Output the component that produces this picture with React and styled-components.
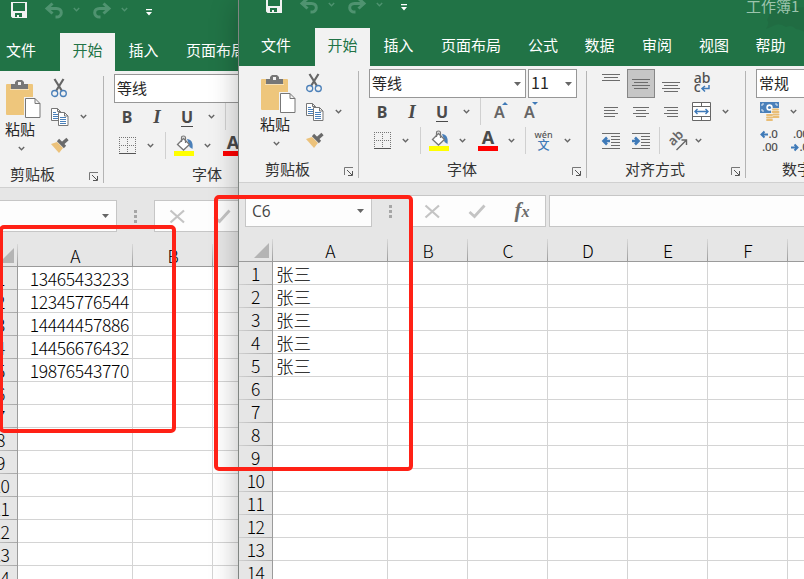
import React from "react";
import styled, { createGlobalStyle, css } from "styled-components";

const UI = `"Noto Sans CJK SC", "Noto Sans", sans-serif`;
const LIGHT = `"Noto Sans CJK SC Light", "Noto Sans CJK SC DemiLight", "Noto Sans CJK SC", sans-serif`;
const LATIN = `"Noto Sans", "Open Sans", sans-serif`;

const Global = createGlobalStyle`
  *, *::before, *::after { box-sizing: border-box; }
  html, body { margin: 0; padding: 0; overflow: hidden; }
  svg { display: block; flex: none; overflow: visible; }
`;

const Desktop = styled.div`
  position: relative;
  width: 804px;
  height: 579px;
  overflow: hidden;
  background: #fff;
  font-family: ${UI};
`;

const Window = styled.section`
  position: absolute;
  left: ${(p) => p.$x}px;
  top: ${(p) => p.$y}px;
  width: 640px;
  height: 600px;
  overflow: hidden;
  background: #e6e6e6;
  display: flex;
  flex-direction: column;
`;

const WindowShadow = styled.div`
  position: absolute;
  left: 238px;
  top: -5px;
  width: 640px;
  height: 620px;
  background: #808582;
  box-shadow: 0 10px 26px rgba(0, 0, 0, 0.27);
`;

const TitleBar = styled.header`
  height: 33px;
  flex: none;
  display: flex;
  align-items: flex-start;
  background: #217346;
`;

const QuickTools = styled.div`
  display: flex;
  align-items: flex-start;
  padding: 2px 0 0 27px;
  width: 507px;
`;

const QuickTool = styled.div`
  width: ${(p) => p.$w}px;
  padding-top: ${(p) => p.$drop || 0}px;
`;

const BookTitle = styled.div`
  width: 133px;
  height: 33px;
  font-size: 15px;
  line-height: 21px;
  color: #9cc4ad;
  white-space: nowrap;
  position: relative;
`;

const BookName = styled.span`
  position: relative;
`;

const Cloud = styled.svg`
  position: absolute;
  left: 18px;
  top: 12px;
`;

const Tabs = styled.nav`
  height: 38px;
  flex: none;
  display: flex;
  background: #217346;
`;

const Tab = styled.div`
  width: ${(p) => p.$w}px;
  flex: none;
  text-align: center;
  font-size: 15px;
  line-height: 33px;
  white-space: nowrap;
  color: ${(p) => (p.$active ? "#217346" : "#fff")};
  background: ${(p) => (p.$active ? "#f2f2f2" : "transparent")};
  &:first-child { padding-right: 2px; }
`;

const Ribbon = styled.div`
  height: 117px;
  flex: none;
  display: flex;
  background: #f2f2f2;
  border-bottom: 1px solid #d0d0d0;
`;

const Group = styled.div`
  width: ${(p) => p.$w}px;
  flex: none;
  padding-top: 3px;
  display: flex;
  flex-direction: column;
`;

const GroupDivider = styled.div`
  width: 1px;
  height: 107px;
  margin-top: 5px;
  background: #b4b4b4;
  flex: none;
`;

const ToolRow = styled.div`
  height: 29px;
  flex: none;
  display: flex;
  align-items: center;
  padding-left: ${(p) => p.$pad || 0}px;
  &:nth-child(2) { margin-top: -1px; }
`;

const Slot = styled.div`
  width: ${(p) => p.$w}px;
  height: 29px;
  flex: none;
  display: flex;
  align-items: center;
  justify-content: center;
  margin-left: ${(p) => p.$ml || 0}px;
  ${(p) => p.$pressed && css`background: #c6c6c6; border: 1px solid #868686;`}
`;

const Rule = styled.div`
  width: 1px;
  height: 27px;
  background: #d0d0d0;
`;

const Combo = styled.div`
  width: ${(p) => p.$w}px;
  height: 29px;
  flex: none;
  display: flex;
  align-items: center;
  justify-content: space-between;
  margin-right: 2px;
  padding: 0 4px 0 2px;
  border: 1px solid #979797;
  background: #fff;
  color: #262626;
  font-size: ${(p) => p.$size || 15}px;
  line-height: 25px;
  white-space: nowrap;
  span { height: 27px; }
`;

const GroupFooter = styled.div`
  height: 27px;
  display: flex;
  align-items: center;
  justify-content: space-between;
  padding: 0 4px 0 ${(p) => p.$pad}px;
  font-size: 15px;
  color: #333;
  white-space: nowrap;
`;

const Launch = styled.div`
  padding-top: 5px;
`;

const ClipTools = styled.div`
  height: 86px;
  display: flex;
`;

const PasteColumn = styled.div`
  width: 61px;
  display: flex;
  flex-direction: column;
  padding: 6px 0 0 22px;
`;

const PasteLabel = styled.div`
  font-size: 15px;
  line-height: 20px;
  margin-left: -1px;
  color: #262626;
  white-space: nowrap;
`;

const PasteArrow = styled.div`
  padding: 7px 0 0 12px;
`;

const ClipColumn = styled.div`
  display: flex;
  flex-direction: column;
  width: 58px;
`;

const Glyph = styled.span`
  font-family: ${LATIN};
  font-weight: 700;
  font-size: 16px;
  line-height: 20px;
  color: #4a4a4a;
`;

const ItalicGlyph = styled(Glyph)`
  font-family: "Liberation Serif", serif;
  font-style: italic;
  font-size: 19px;
`;

const UnderGlyph = styled(Glyph)`
  line-height: 15px;
  margin-top: 3px;
  padding-bottom: 1px;
  border-bottom: 1px solid #4a4a4a;
`;

const FormulaBar = styled.div`
  height: 56px;
  flex: none;
  display: flex;
  align-items: flex-start;
  padding: 12px 0 0 6px;
`;

const NameBox = styled.div`
  width: 127px;
  height: 32px;
  display: flex;
  align-items: center;
  justify-content: space-between;
  padding: 0 7px 0 6px;
  border: 1px solid #c6c6c6;
  background: #fdfdfd;
  color: #444;
  font-family: "Open Sans", sans-serif;
  font-size: 15.5px;
`;

const Grip = styled.div`
  width: 37px;
  height: 32px;
  display: flex;
  align-items: center;
  justify-content: center;
`;

const EditKeys = styled.div`
  width: 137px;
  height: 32px;
  display: flex;
  align-items: center;
  border: 1px solid #c6c6c6;
  background: #fdfdfd;
`;

const EditKey = styled.div`
  width: 45px;
  display: flex;
  justify-content: center;
  padding-right: 1px;
`;

const FxKey = styled(EditKey)`
  font-family: "Liberation Serif", serif;
  font-style: italic;
  font-weight: 700;
  font-size: 21px;
  line-height: 26px;
  height: 28px;
  color: #6a6a6a;
  span { font-size: 16px; padding-top: 2px; }
`;

const FormulaInput = styled.div`
  flex: 1;
  height: 32px;
  margin-left: 3px;
  border: 1px solid #c6c6c6;
  background: #fdfdfd;
`;

const Sheet = styled.div`
  display: grid;
  grid-template-columns: 34px 115px repeat(7, 80px);
  grid-auto-rows: 23px;
  flex: none;
  font-family: ${LIGHT};
  font-weight: 300;
  font-size: 17.5px;
  line-height: 23px;
  color: #000;
`;

const Corner = styled.div`
  border-bottom: 1px solid #9b9b9b;
  display: flex;
  justify-content: flex-end;
  padding: 4px 4px 0 0;
  background: linear-gradient(#d8d8d8, #9b9b9b) right / 1px 100% no-repeat;
`;

const ColumnHead = styled.div`
  text-align: center;
  border-bottom: 1px solid #9b9b9b;
  background: linear-gradient(#d8d8d8, #9b9b9b) right / 1px 100% no-repeat;
`;

const RowHead = styled.div`
  text-align: center;
  letter-spacing: -0.5px;
  border-right: 1px solid #9b9b9b;
  background: linear-gradient(90deg, #d0d0d0, #a8a8a8) bottom / 100% 1px no-repeat;
`;

const Cell = styled.div`
  background: #fff;
  border-right: 1px solid #d4d4d4;
  border-bottom: 1px solid #d4d4d4;
  padding: 0 3px;
  text-align: ${(p) => (p.$number ? "right" : "left")};
  letter-spacing: ${(p) => (p.$number ? "-0.34px" : "0")};
  white-space: nowrap;
`;

const Marker = styled.div`
  position: absolute;
  left: ${(p) => p.$x}px;
  top: ${(p) => p.$y}px;
  width: ${(p) => p.$w}px;
  height: ${(p) => p.$h}px;
  border: 4px solid #ff2116;
  border-radius: 5px;
`;

const Chevron = ({ color = "#666" }) => (
  <svg width="7" height="5" viewBox="0 0 7 5">
    <path d="M.8 1 3.500 3.700 6.200 1" fill="none" stroke={color} strokeWidth="1.4" />
  </svg>
);

const Triangle = () => (
  <svg width="7" height="4" viewBox="0 0 7 4"><path d="M0 0h7L3.500 4z" fill="#666" /></svg>
);

const SaveIcon = () => (
  <svg width="16" height="16" viewBox="0 0 16 16">
    <path fillRule="evenodd" fill="#f2f2f2" d="M0 0h16v16H1.500L0 14.500zM2 1v8h12V1zM4 11v4h2v-2h2v2h3v-4z" />
  </svg>
);

const UndoIcon = ({ flip }) => (
  <svg width="18" height="16" viewBox="0 0 18 16">
    <g transform={flip ? "matrix(-1 0 0 1 18 0)" : undefined} fill="none" stroke="#4f9370" strokeWidth="3">
      <path d="M7.500 .500 2 5.500 7.500 10.500" />
      <path d="M2 5.500h9.500c3 0 4.800 1.800 4.800 4.200 0 2.600-2 4.300-4.800 4.300h-1" />
    </g>
  </svg>
);

const MoreIcon = () => (
  <svg width="6" height="7" viewBox="0 0 6 7"><path fill="#fff" d="M0 0h6v1.200H0zM0 3h6L3 6.500z" /></svg>
);

const PasteIcon = () => (
  <svg width="35" height="39" viewBox="0 0 35 39">
    <rect x="0" y="4" width="27" height="31" rx="1" fill="#eec67c" />
    <path d="M5 4h4V2l2-2h5l2 2v2h4v5H5z" fill="#777" />
    <path d="M12 2h3v3h-3z" fill="#f2f2f2" />
    <path d="M4 9.500h19" stroke="#f6e1b8" />
    <path d="M18 17h12l5 5v17H18z" fill="#f2f2f2" />
    <path d="M19.500 18.500h9.500l5 5v14h-14.500zM29 18.500v5h5" fill="#fff" stroke="#777" />
  </svg>
);

const CutIcon = () => (
  <svg width="17" height="19" viewBox="0 0 17 19">
    <path d="M3.500 0 11 12M12.500 0 5 12" stroke="#666" strokeWidth="2.200" fill="none" />
    <circle cx="3.700" cy="14.500" r="3" fill="none" stroke="#4a7fb8" strokeWidth="1.300" />
    <circle cx="12.300" cy="14.500" r="3" fill="none" stroke="#4a7fb8" strokeWidth="1.300" />
  </svg>
);

const CopyIcon = () => (
  <svg width="18" height="18" viewBox="0 0 18 18">
    <path d="M.5.500h6l3 3v9h-9zM6.500.500v3h3" fill="#fff" stroke="#777" />
    <path d="M2 4.500h3M2 6.500h5M2 8.500h5M2 10.500h5" stroke="#4a80ba" />
    <path d="M7.500 4.500h6l3.500 3.500v9.500h-9.500zM13.500 4.500v3.500h3.500" fill="#fff" stroke="#777" />
    <path d="M9 9.500h6M9 11.500h6M9 13.500h6M9 15.500h6" stroke="#4a80ba" />
  </svg>
);

const BrushIcon = () => (
  <svg width="18" height="15" viewBox="0 0 18 15">
    <path d="m0 6 6-2 6 6-4 5z" fill="#ecc27b" />
    <path d="m7 2 7 7" stroke="#6a6a6a" strokeWidth="3.200" />
    <path d="m11.500 5.500 5-4.500" stroke="#6a6a6a" strokeWidth="3.400" />
  </svg>
);

const LaunchIcon = () => (
  <svg width="10" height="9" viewBox="0 0 10 9">
    <path d="M.5 8V.500H9" fill="none" stroke="#777" />
    <path d="m3 3 5 5M8.500 4v4.500H4" fill="none" stroke="#555" />
  </svg>
);

const BorderIcon = () => (
  <svg width="17" height="17" viewBox="0 0 17 17">
    <path d="M0 .500h17M0 8.500h17M.5 0v16M8.500 0v16M16.500 0v16" stroke="#777" strokeDasharray="1 1" fill="none" />
    <path d="M0 16.500h17" stroke="#555" />
  </svg>
);

const BucketIcon = () => (
  <svg width="20" height="20" viewBox="0 0 20 20">
    <path d="M13 3c4 .500 6.500 3 5.500 10l-3-2-1-4z" fill="#4a80ba" />
    <path d="m3.500 8.500 6-6 6 6-6 5.500z" fill="#fff" stroke="#777" strokeWidth="1.300" />
    <path d="M7.500 6V2q0-2 2-2t2 2v5" fill="none" stroke="#777" strokeWidth="1.200" />
    <path d="M0 15h20v5H0z" fill="#ff0" />
  </svg>
);

const FontColor = styled.div`
  width: 20px;
  height: 20px;
  border-bottom: 5px solid #f00;
  text-align: center;
  font: 700 18px/13px ${LATIN};
  color: #4a4a4a;
`;

const SizeStep = styled.div`
  display: flex;
  align-items: flex-start;
  font: 600 16px/20px ${LATIN};
  color: #666;
  svg { margin: 0 0 0 -3px; }
`;

const Phonetic = styled.div`
  display: flex;
  flex-direction: column;
  align-items: center;
  font: 500 9px/8px ${LATIN};
  color: #555;
  b { font: 500 12px/11px ${UI}; color: #3f7ab8; }
`;

const TopLines = () => (
  <svg width="18" height="19" viewBox="0 0 18 19">
    <path d="M0 .500h18M2 3.500h14M0 6.500h18" stroke="#6c6c6c" />
  </svg>
);

const MidLines = () => (
  <svg width="18" height="10" viewBox="0 0 18 10">
    <path d="M0 .500h18M2 3.500h14M0 6.500h18M2 9.500h14" stroke="#6c6c6c" />
  </svg>
);

const LowLines = () => (
  <svg width="18" height="19" viewBox="0 0 18 19">
    <path d="M0 8.500h18M2 11.500h14M0 14.500h18M2 17.500h14" stroke="#6c6c6c" />
  </svg>
);

const WrapText = styled.div`
  font: 500 14px/10px ${LATIN};
  color: #4f4f4f;
  display: flex;
  flex-direction: column;
  margin-top: -4px;
  div { display: flex; align-items: center; line-height: 8px; height: 8px; }
  svg { margin-top: 3px; }
`;

const ReturnIcon = () => (
  <svg width="9" height="7" viewBox="0 0 9 7">
    <path d="M8 0v3.500H1M4 1 1 3.500 4 6.500" fill="none" stroke="#3f7ab8" strokeWidth="1.500" />
  </svg>
);

const MergeIcon = () => (
  <svg width="19" height="19" viewBox="0 0 19 19">
    <path d="M.5.500h18v18H.5zM.5 4.500h18M.5 14.500h18M9.500.500v4M9.500 14.500v4" fill="#fff" stroke="#666" />
    <path d="M3 9.500h13M5.500 7 3 9.500 5.500 12M13.500 7 16 9.500 13.500 12" fill="none" stroke="#3f7ab8" strokeWidth="1.400" />
  </svg>
);

const IndentIcon = ({ right }) => (
  <svg width="18" height="16" viewBox="0 0 18 16">
    <path d="M0 .500h18M9 3.500h9M9 6.500h9M9 9.500h9M9 12.500h9M0 15.500h18" stroke="#6c6c6c" />
    <g transform={right ? "matrix(-1 0 0 1 8 0)" : undefined}>
      <path d="M8 8H2M5 4.500 1.500 8 5 11.500" fill="none" stroke="#3f7ab8" strokeWidth="2.600" />
    </g>
  </svg>
);

const OrientIcon = () => (
  <svg width="20" height="18" viewBox="0 0 20 18">
    <text x="5" y="14.500" transform="rotate(-45 5 14.500)" fontFamily="Noto Sans" fontSize="13" fontWeight="600" fill="#666">ab</text>
    <path d="M8.500 18 18 8.500M13.500 8h5v5" fill="none" stroke="#666" strokeWidth="1.400" />
  </svg>
);

const MoneyIcon = () => (
  <svg width="20" height="19" viewBox="0 0 20 19">
    <path d="M0 0h19v11H0z" fill="#4a80ba" />
    <path d="M2 4V2h2M2 7v2h2M15 2h2v2" fill="none" stroke="#dfe9f3" />
    <circle cx="9.500" cy="5.500" r="3.200" fill="#fff" />
    <circle cx="9.500" cy="5.500" r="1.600" fill="#4a80ba" />
    <path d="M11 6h9v13H5.500v-7.500H11z" fill="#f2f2f2" />
    <path d="M13 7.500h5M12.500 10h6M13.500 12.500h5M13.500 15h5M7 13h5M7 15.500h5M7 18h5" stroke="#e9bd75" strokeWidth="1.900" strokeLinecap="round" />
  </svg>
);

const Decimal = styled.div`
  width: 17px;
  margin-top: -2px;
  font: 500 11.5px/13px ${LATIN};
  letter-spacing: -0.3px;
  color: #4f4f4f;
  text-align: right;
  white-space: nowrap;
  div { display: flex; align-items: center; justify-content: flex-end; }
  svg { margin-top: 2px; }
`;

const Arrow = ({ right }) => (
  <svg width="8" height="7" viewBox="0 0 8 7">
    <g transform={right ? "matrix(-1 0 0 1 8 0)" : undefined}>
      <path d="M8 3.500H1.500M4.500.500l-3 3 3 3" fill="none" stroke="#3f7ab8" strokeWidth="2" />
    </g>
  </svg>
);

const COLUMNS = ["A", "B", "C", "D", "E", "F", "G", "H"];
const TABS = [
  ["文件", 76], ["开始", 55, true], ["插入", 57], ["页面布局", 88], ["公式", 56],
  ["数据", 57], ["审阅", 58], ["视图", 56], ["帮助", 57],
];

function ClipboardGroup() {
  return (
    <Group $w={119}>
      <ClipTools>
        <PasteColumn>
          <PasteIcon />
          <PasteLabel>粘贴</PasteLabel>
          <PasteArrow><Chevron /></PasteArrow>
        </PasteColumn>
        <ClipColumn>
          <ToolRow $pad={6}><CutIcon /></ToolRow>
          <ToolRow $pad={6}><CopyIcon /><Slot $w={28}><Chevron /></Slot></ToolRow>
          <ToolRow $pad={6}><BrushIcon /></ToolRow>
        </ClipColumn>
      </ClipTools>
      <GroupFooter $pad={26}>剪贴板<Launch><LaunchIcon /></Launch></GroupFooter>
    </Group>
  );
}

function FontGroup() {
  return (
    <Group $w={227}>
      <ToolRow $pad={10}>
        <Combo $w={157}><span>等线</span><Triangle /></Combo>
        <Combo $w={49} $size={16}><span>11</span><Triangle /></Combo>
      </ToolRow>
      <ToolRow $pad={8}>
        <Slot $w={30}><Glyph>B</Glyph></Slot>
        <Slot $w={30}><ItalicGlyph>I</ItalicGlyph></Slot>
        <Slot $w={30}><UnderGlyph>U</UnderGlyph></Slot>
        <Slot $w={18}><Chevron /></Slot>
        <Slot $w={10}><Rule /></Slot>
        <Slot $w={32}>
          <SizeStep>A<svg width="6" height="3" viewBox="0 0 6 3"><path d="M0 3h6L3 0z" fill="#3f7ab8" /></svg></SizeStep>
        </Slot>
        <Slot $w={28}>
          <SizeStep>A<svg width="6" height="3" viewBox="0 0 6 3"><path d="M0 0h6L3 3z" fill="#3f7ab8" /></svg></SizeStep>
        </Slot>
      </ToolRow>
      <ToolRow $pad={8}>
        <Slot $w={30}><BorderIcon /></Slot>
        <Slot $w={17}><Chevron /></Slot>
        <Slot $w={12}><Rule /></Slot>
        <Slot $w={26}><BucketIcon /></Slot>
        <Slot $w={20}><Chevron /></Slot>
        <Slot $w={32}><FontColor>A</FontColor></Slot>
        <Slot $w={14}><Chevron /></Slot>
        <Slot $w={14}><Rule /></Slot>
        <Slot $w={23}><Phonetic>wén<b>文</b></Phonetic></Slot>
        <Slot $w={24}><Chevron /></Slot>
      </ToolRow>
      <GroupFooter $pad={88}>字体<Launch><LaunchIcon /></Launch></GroupFooter>
    </Group>
  );
}

function AlignGroup() {
  return (
    <Group $w={158}>
      <ToolRow $pad={10}>
        <Slot $w={28}><TopLines /></Slot>
        <Slot $w={28} $ml={2} $pressed><MidLines /></Slot>
        <Slot $w={28} $ml={2}><LowLines /></Slot>
        <Slot $w={34}>
          <WrapText>ab<div>c<ReturnIcon /></div></WrapText>
        </Slot>
      </ToolRow>
      <ToolRow $pad={10}>
        <Slot $w={28}><svg width="14" height="10" viewBox="0 0 14 10"><path d="M0 .500h14M0 3.500h11M0 6.500h14M0 9.500h11" stroke="#6c6c6c" /></svg></Slot>
        <Slot $w={28} $ml={2}><svg width="16" height="10" viewBox="0 0 16 10"><path d="M0 .500h16M3 3.500h10M0 6.500h16M3 9.500h10" stroke="#6c6c6c" /></svg></Slot>
        <Slot $w={28} $ml={2}><svg width="14" height="10" viewBox="0 0 14 10"><path d="M0 .500h14M3 3.500h11M0 6.500h14M3 9.500h11" stroke="#6c6c6c" /></svg></Slot>
        <Slot $w={33}><MergeIcon /></Slot>
        <Slot $w={14}><Chevron /></Slot>
      </ToolRow>
      <ToolRow $pad={10}>
        <Slot $w={28}><IndentIcon /></Slot>
        <Slot $w={28} $ml={2}><IndentIcon right /></Slot>
        <Slot $w={9}><Rule /></Slot>
        <Slot $w={28}><OrientIcon /></Slot>
        <Slot $w={12}><Chevron /></Slot>
      </ToolRow>
      <GroupFooter $pad={38}>对齐方式<Launch><LaunchIcon /></Launch></GroupFooter>
    </Group>
  );
}

function NumberGroup() {
  return (
    <Group $w={160}>
      <ToolRow $pad={10}><Combo $w={130}><span>常规</span><Triangle /></Combo></ToolRow>
      <ToolRow $pad={10}>
        <Slot $w={28}><MoneyIcon /></Slot>
        <Slot $w={18}><Chevron /></Slot>
      </ToolRow>
      <ToolRow $pad={10}>
        <Slot $w={26}><Decimal><div><Arrow />.0</div>.00</Decimal></Slot>
        <Slot $w={36}><Decimal>.00<div><Arrow right />.0</div></Decimal></Slot>
      </ToolRow>
      <GroupFooter $pad={36}>数字</GroupFooter>
    </Group>
  );
}

function ExcelWindow({ x, y, title, active, values, numeric }) {
  return (
    <Window $x={x} $y={y}>
      <TitleBar>
        <QuickTools>
          <QuickTool $w={34}><SaveIcon /></QuickTool>
          <QuickTool $w={28} $drop={1}><UndoIcon /></QuickTool>
          <QuickTool $w={20} $drop={5}><Chevron color="#4f9370" /></QuickTool>
          <QuickTool $w={28} $drop={1}><UndoIcon flip /></QuickTool>
          <QuickTool $w={25} $drop={5}><Chevron color="#4f9370" /></QuickTool>
          <QuickTool $w={10} $drop={7}><MoreIcon /></QuickTool>
        </QuickTools>
        {title && (
          <BookTitle>
            <Cloud width="42" height="26" viewBox="0 0 42 26">
              <path d="M42 0v26q-5-4-10-4-4-5-10-2-7-5-13-1l-7 3q4-6 1-9 4-6 0-10 5 2 9-1z" fill="#206a41" opacity=".75" />
            </Cloud>
            <BookName>{title}</BookName>
          </BookTitle>
        )}
      </TitleBar>
      <Tabs>
        {TABS.map(([label, w, on]) => <Tab key={label} $w={w} $active={on}>{label}</Tab>)}
      </Tabs>
      <Ribbon>
        <ClipboardGroup />
        <GroupDivider />
        <FontGroup />
        <GroupDivider />
        <AlignGroup />
        <GroupDivider />
        <NumberGroup />
      </Ribbon>
      <FormulaBar>
        <NameBox><span>{active}</span><Triangle /></NameBox>
        <Grip>
          <svg width="3" height="13" viewBox="0 0 3 13"><path d="M0 0h3v3H0zM0 5h3v3H0zM0 10h3v3H0z" fill="#a6a6a6" /></svg>
        </Grip>
        <EditKeys>
          <EditKey><svg width="15" height="13" viewBox="0 0 15 13"><path d="M.5.500 14 12.500M14 .500 .5 12.500" stroke="#c4c4c4" strokeWidth="2.200" /></svg></EditKey>
          <EditKey><svg width="16" height="13" viewBox="0 0 16 13"><path d="M.5 7 5.500 11.500 15.500 .500" fill="none" stroke="#c4c4c4" strokeWidth="2.800" /></svg></EditKey>
          <FxKey>f<span>x</span></FxKey>
        </EditKeys>
        <FormulaInput />
      </FormulaBar>
      <Sheet>
        <Corner><svg width="15" height="15" viewBox="0 0 15 15"><path d="M15 0v15H0z" fill="#b4b4b4" /></svg></Corner>
        {COLUMNS.map((c) => <ColumnHead key={c}>{c}</ColumnHead>)}
        {Array.from({ length: 15 }, (_, r) => (
          <React.Fragment key={r}>
            <RowHead>{r + 1}</RowHead>
            {COLUMNS.map((c) => (
              <Cell key={c} $number={numeric}>{c === "A" ? values[r] : null}</Cell>
            ))}
          </React.Fragment>
        ))}
      </Sheet>
    </Window>
  );
}

export default function App() {
  return (
    <>
      <Global />
      <Desktop>
        <ExcelWindow
          x={-16}
          y={0}
          numeric
          values={["13465433233", "12345776544", "14444457886", "14456676432", "19876543770"]}
        />
        <WindowShadow />
        <ExcelWindow x={239} y={-5} title="工作簿1" active="C6" values={["张三", "张三", "张三", "张三", "张三"]} />
        <Marker $x={-1} $y={225} $w={177} $h={208} />
        <Marker $x={214} $y={195} $w={199} $h={276} />
      </Desktop>
    </>
  );
}
